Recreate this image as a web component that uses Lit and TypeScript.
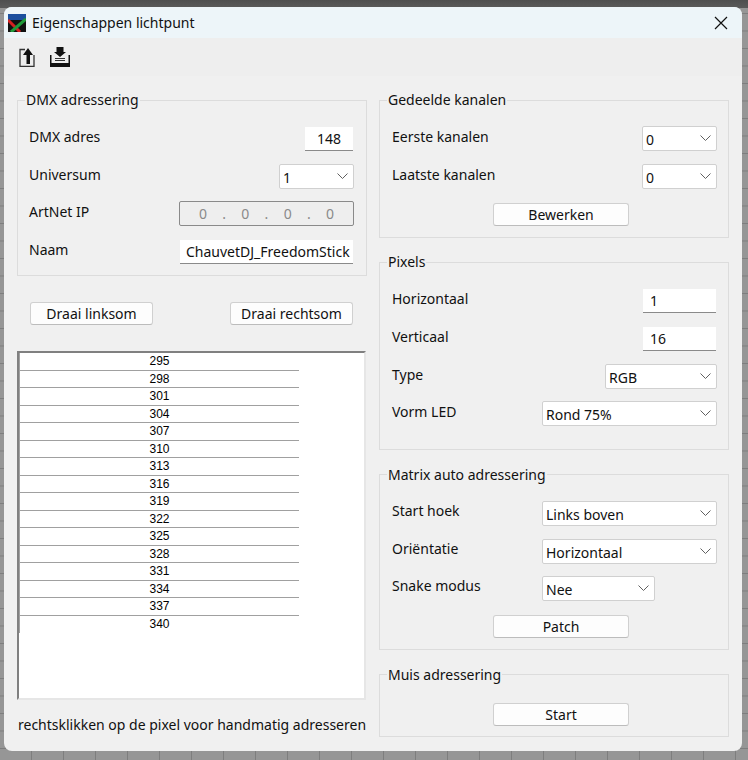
import { LitElement, html, css } from 'lit';
import { customElement } from 'lit/decorators.js';

const ROWS = [295, 298, 301, 304, 307, 310, 313, 316, 319, 322, 325, 328, 331, 334, 337, 340];

const chevron = html`<svg class="chev" width="11" height="6" viewBox="0 0 11 6"><path d="M.5.5l5 5 5-5" fill="none" stroke="#606060"/></svg>`;

@customElement('app-root')
export class AppRoot extends LitElement {
  static styles = css`
    :host {
      display: block;
      width: 748px;
      height: 760px;
      box-sizing: border-box;
      padding: 7px 6px 9px 4px;
      overflow: hidden;
      background-color: #969696;
      background-image:
        linear-gradient(#4f4f4f 0, #5a5a5a 8px, transparent 8px),
        linear-gradient(#7e7e7e 1px, transparent 1px),
        linear-gradient(90deg, #7e7e7e 1px, transparent 1px);
      background-size: 100% 100%, 32px 17.5px, 32px 17.5px;
      background-position: 0 0, 31px 13px, 31px 13px;
      font-family: 'Noto Sans', 'Open Sans', sans-serif;
      font-size: 14px;
      color: #111;
    }
    .window {
      height: 744px;
      background: #f0f0f0;
      border-radius: 8px;
      overflow: hidden;
      display: flex;
      flex-direction: column;
    }
    .title {
      height: 31px;
      flex: none;
      background: #edf5f9;
      display: flex;
      align-items: center;
      padding: 0 14px 0 4px;
      gap: 6px;
    }
    .title span { flex: 1; }
    .bar {
      height: 38px;
      flex: none;
      background: #eeeeee;
      display: flex;
      align-items: center;
      gap: 15px;
      padding: 0 0 0 15px;
    }
    .body {
      flex: 1;
      display: grid;
      grid-template-columns: 350px 350px;
      column-gap: 12px;
      padding: 16px 0 0 13px;
    }
    .col { display: flex; flex-direction: column; }
    fieldset {
      margin: 0;
      padding: 0;
      min-width: 0;
      border: 1px solid #dcdcdc;
      box-sizing: border-box;
    }
    legend {
      margin-left: 7px;
      padding: 0 1px;
      font-size: 14px;
      line-height: 16px;
    }
    .low legend { position: relative; top: 1px; }
    .row {
      display: flex;
      align-items: center;
      justify-content: space-between;
      height: 25px;
      margin: 0 12px 0 12px;
    }
    .row label { position: relative; top: -2px; }
    .low .row label { top: -3px; }
    .left .row { margin-left: 11px; }
    .left input { margin-right: 1px; }
    .right .select { margin-right: -1px; }
    .right input { padding-left: 7px; }
    input, .select, .ip, button {
      box-sizing: border-box;
      font: inherit;
      color: inherit;
      height: 25px;
    }
    input {
      background: #fff;
      border: 0;
      border-bottom: 1px solid #8a8a8a;
      height: 24px;
      padding: 1px 0 0 6px;
      outline: none;
    }
    .select {
      background: #fff;
      border: 1px solid #d0d0d0;
      border-radius: 2px;
      display: flex;
      align-items: center;
      justify-content: space-between;
      padding: 2px 5px 0 3px;
    }
    .chev { margin-top: -4px; }
    .ip {
      width: 175px;
      border: 1px solid #8a8a8a;
      border-radius: 2px;
      background: #eeeeee;
      color: #8a8a8a;
      display: flex;
      align-items: center;
      justify-content: space-between;
      padding: 0 19px;
    }
    button {
      height: 23px;
      background: #fdfdfd;
      border: 1px solid #d0d0d0;
      border-bottom-color: #bcbcbc;
      border-radius: 3px;
      padding: 1px 0 0;
      line-height: 1;
    }
    .center { display: flex; justify-content: center; padding-left: 14px; }
    .rotate {
      display: flex;
      justify-content: space-between;
      padding: 0 14px 0 13px;
      margin: 26px 0 26px;
    }
    .rotate button { width: 123px; }
    .wide { width: 136px; }
    .table {
      width: 349px;
      height: 349px;
      box-sizing: border-box;
      background: #fff;
      border: 2px solid;
      border-color: #808080 #e6e6e6 #e6e6e6 #808080;
    }
    .cells {
      width: 280px;
      box-sizing: border-box;
      border-left: 1px solid #a0a0a0;
      font: 12px 'Liberation Sans', Arial, sans-serif;
      color: #000;
      text-align: center;
    }
    .cells div {
      height: 17.53px;
      line-height: 17px;
      box-sizing: border-box;
      border-bottom: 1px solid #a0a0a0;
    }
    .cells div:last-child { border-bottom: 0; }
    .hint { margin: 15px 0 0 1px; line-height: 20px; white-space: nowrap; }
  `;

  render() {
    return html`
      <div class="window">
        <div class="title">
          <svg width="18" height="18" viewBox="0 0 18 18">
            <rect width="18" height="18" fill="#111"/>
            <rect width="18" height="6" fill="#1c4f9e"/>
            <path d="M0 6l12 12" stroke="#d62020" stroke-width="3"/>
            <path d="M18 5L3 18" stroke="#1f9a3a" stroke-width="3"/>
          </svg>
          <span>Eigenschappen lichtpunt</span>
          <svg width="14" height="14" viewBox="0 0 14 14"><path d="M1 1l12 12M13 1L1 13" stroke="#111" stroke-width="1.2" fill="none"/></svg>
        </div>
        <div class="bar">
          <svg width="16" height="19" viewBox="0 0 16 19">
            <path d="M6 1.500H1v17h14V7" fill="none" stroke="#333" stroke-width="1.3"/>
            <path d="M9 0l5 7h-3v9H7.500V7H4z" fill="#111"/>
          </svg>
          <svg width="20" height="20" viewBox="0 0 20 20">
            <path d="M6.500 0h7v5H16l-6 5-6-5h2.500z" fill="#111"/>
            <path d="M0 8h1.500v8h17V8H20v12H0z" fill="#111"/>
            <path d="M5 11.500h10M5 13.500h10" stroke="#333"/>
          </svg>
        </div>
        <div class="body">
          <div class="col left">
            <fieldset style="height:184px">
              <legend>DMX adressering</legend>
              <div class="row" style="margin-top:18px"><label>DMX adres</label><input style="width:48px;text-align:center;padding-left:0" value="148"></div>
              <div class="row" style="margin-top:13px"><label>Universum</label><div class="select" style="width:75px">1${chevron}</div></div>
              <div class="row" style="margin-top:12px"><label>ArtNet IP</label><div class="ip"><span>0</span><span>.</span><span>0</span><span>.</span><span>0</span><span>.</span><span>0</span></div></div>
              <div class="row" style="margin-top:13px"><label>Naam</label><input style="width:173px" value="ChauvetDJ_FreedomStick"></div>
            </fieldset>
            <div class="rotate"><button>Draai linksom</button><button>Draai rechtsom</button></div>
            <div class="table">
              <div class="cells">${ROWS.map((r) => html`<div>${r}</div>`)}</div>
            </div>
            <div class="hint">rechtsklikken op de pixel voor handmatig adresseren</div>
          </div>
          <div class="col right">
            <fieldset style="height:146px">
              <legend>Gedeelde kanalen</legend>
              <div class="row" style="margin-top:18px"><label>Eerste kanalen</label><div class="select" style="width:75px">0${chevron}</div></div>
              <div class="row" style="margin-top:13px"><label>Laatste kanalen</label><div class="select" style="width:75px">0${chevron}</div></div>
              <div class="center" style="margin-top:14px"><button class="wide">Bewerken</button></div>
            </fieldset>
            <fieldset style="height:196px;margin-top:16px">
              <legend>Pixels</legend>
              <div class="row" style="margin-top:18px"><label>Horizontaal</label><input style="width:73px" value="1"></div>
              <div class="row" style="margin-top:13px"><label>Verticaal</label><input style="width:73px" value="16"></div>
              <div class="row" style="margin-top:13px"><label>Type</label><div class="select" style="width:112px">RGB${chevron}</div></div>
              <div class="row" style="margin-top:12px"><label>Vorm LED</label><div class="select" style="width:175px">Rond 75%${chevron}</div></div>
            </fieldset>
            <fieldset class="low" style="height:184px;margin-top:16px">
              <legend>Matrix auto adressering</legend>
              <div class="row" style="margin-top:19px"><label>Start hoek</label><div class="select" style="width:175px">Links boven${chevron}</div></div>
              <div class="row" style="margin-top:13px"><label>Oriëntatie</label><div class="select" style="width:175px">Horizontaal${chevron}</div></div>
              <div class="row" style="margin-top:12px;justify-content:flex-start"><label style="width:150px">Snake modus</label><div class="select" style="width:113px">Nee${chevron}</div></div>
              <div class="center" style="margin-top:14px"><button class="wide">Patch</button></div>
            </fieldset>
            <fieldset class="low" style="height:71px;margin-top:16px">
              <legend>Muis adressering</legend>
              <div class="center" style="margin-top:21px"><button class="wide">Start</button></div>
            </fieldset>
          </div>
        </div>
      </div>
    `;
  }
}
